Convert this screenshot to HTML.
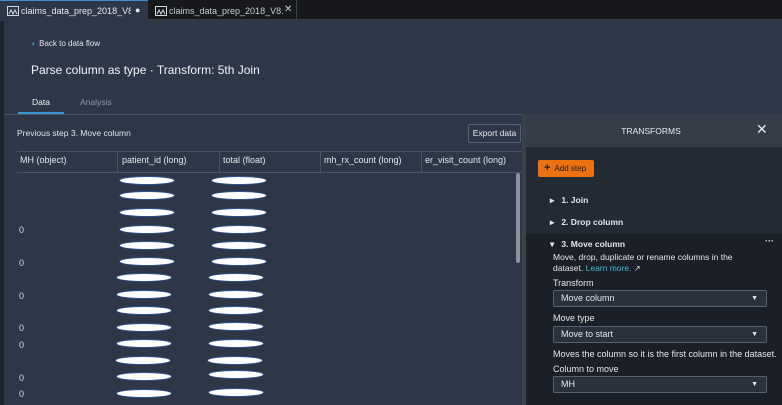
<!DOCTYPE html>
<html><head><meta charset="utf-8"><style>
*{box-sizing:border-box;margin:0;padding:0}
body{width:782px;height:405px;overflow:hidden;background:#2d3748;font-family:"Liberation Sans",sans-serif;position:relative;color:#d5dbe3}
.abs{position:absolute}
.tabbar{left:0;top:0;width:782px;height:20px;background:#17191d;border-bottom:1px solid #3a3f47}
.tab{top:2px;height:18px;font-size:9px;color:#e8eaed;line-height:18px;white-space:nowrap;overflow:hidden}
.ic{position:absolute;top:6px;width:12px;height:10px;border:1px solid #cfd6de}
.ic svg{position:absolute;left:0;top:0}
.el{position:absolute;width:56px;height:9px;border-radius:50%;background:#fff;border:1.5px solid #2f5597}
.z{position:absolute;left:19px;font-size:9px;color:#d5dbe3}
.th{position:absolute;top:155px;font-size:9px;color:#e3e7ec}
.sep{position:absolute;width:1px;background:#4a5363}
.sel{position:absolute;left:553px;width:214px;height:17px;background:#2a313c;border:1px solid #56606e;border-radius:2px;font-size:9px;color:#e3e7ec;line-height:15px;padding-left:7px}
.sel:after{content:"▼";position:absolute;right:8px;top:0;font-size:7px}
.lbl{position:absolute;left:553px;font-size:9px;color:#e3e7ec}
</style></head><body>
<div class="abs tabbar"></div>
<div class="abs" style="left:0;top:0;width:148px;height:21px;background:#2d3748;border-top:1px solid #3d8fd0"></div>
<div class="ic" style="left:7px"><svg width="12" height="10"><path d="M1 7 L3 3 L5 7 L7 3 L9 7" stroke="#cfd6de" fill="none"/></svg></div>
<div class="abs tab" style="left:21px;width:110px">claims_data_prep_2018_V8_[</div>
<div class="abs" style="left:135px;top:5px;font-size:9px;color:#e8eaed">●</div>
<div class="abs" style="left:149px;top:0;width:148px;height:20px;border-right:1px solid #3a3f47"></div>
<div class="ic" style="left:155px"><svg width="12" height="10"><path d="M1 7 L3 3 L5 7 L7 3 L9 7" stroke="#cfd6de" fill="none"/></svg></div>
<div class="abs tab" style="left:169px;width:115px;color:#c8ccd2">claims_data_prep_2018_V8.fl</div>
<div class="abs" style="left:284px;top:4px;font-size:10px;color:#c8ccd2">✕</div>
<div class="abs" style="left:0;top:21px;width:4px;height:384px;background:#1e242d"></div>
<div class="abs" style="left:32px;top:39px;font-size:8px;color:#dfe4ea"><span style="color:#44b9d6;font-weight:bold">‹</span>&nbsp; Back to data flow</div>
<div class="abs" style="left:31px;top:63px;font-size:12px;color:#f2f4f7">Parse column as type · Transform: 5th Join</div>
<div class="abs" style="left:32px;top:97px;font-size:8.5px;color:#f2f4f7">Data</div>
<div class="abs" style="left:80px;top:97px;font-size:8.5px;color:#8c96a3">Analysis</div>
<div class="abs" style="left:18px;top:112px;width:46px;height:2px;background:#3d9ad1"></div>
<div class="abs" style="left:4px;top:114px;width:778px;height:1px;background:#4a5363"></div>
<div class="abs" style="left:17px;top:128px;font-size:8.5px;color:#dfe4ea">Previous step 3. Move column</div>
<div class="abs" style="left:468px;top:124px;width:53px;height:19px;border:1px solid #5a6373;border-radius:2px;font-size:8.5px;line-height:17px;text-align:center;color:#e8ebef">Export data</div>
<div class="abs" style="left:17px;top:151px;width:505px;height:1px;background:#4a5363"></div>
<div class="abs" style="left:17px;top:172px;width:505px;height:1px;background:#4a5363"></div>
<div class="sep" style="left:117px;top:152px;height:20px"></div>
<div class="sep" style="left:219px;top:152px;height:20px"></div>
<div class="sep" style="left:320px;top:152px;height:20px"></div>
<div class="sep" style="left:421px;top:152px;height:20px"></div>
<div class="th" style="left:20px">MH (object)</div>
<div class="th" style="left:122px">patient_id (long)</div>
<div class="th" style="left:223px">total (float)</div>
<div class="th" style="left:324px">mh_rx_count (long)</div>
<div class="th" style="left:425px">er_visit_count (long)</div>
<div class="abs" style="left:516px;top:173px;width:4px;height:90px;background:#8a929c;border-radius:2px"></div>
<div class="abs" style="left:522px;top:114px;width:4px;height:291px;background:#3a414b"></div>
<div class="z" style="top:225px">0</div><div class="z" style="top:258px">0</div><div class="z" style="top:291px">0</div><div class="z" style="top:323px">0</div><div class="z" style="top:340px">0</div><div class="z" style="top:373px">0</div><div class="z" style="top:389px">0</div>
<div class="el" style="left:119px;top:176px"></div><div class="el" style="left:211px;top:176px"></div>
<div class="el" style="left:119px;top:191px"></div><div class="el" style="left:211px;top:191px"></div>
<div class="el" style="left:119px;top:208px"></div><div class="el" style="left:211px;top:208px"></div>
<div class="el" style="left:119px;top:225px"></div><div class="el" style="left:211px;top:225px"></div>
<div class="el" style="left:119px;top:241px"></div><div class="el" style="left:211px;top:241px"></div>
<div class="el" style="left:119px;top:257px"></div><div class="el" style="left:211px;top:257px"></div>
<div class="el" style="left:116px;top:273px"></div><div class="el" style="left:208px;top:273px"></div>
<div class="el" style="left:116px;top:290px"></div><div class="el" style="left:208px;top:290px"></div>
<div class="el" style="left:116px;top:306px"></div><div class="el" style="left:208px;top:306px"></div>
<div class="el" style="left:116px;top:323px"></div><div class="el" style="left:208px;top:322px"></div>
<div class="el" style="left:116px;top:339px"></div><div class="el" style="left:208px;top:339px"></div>
<div class="el" style="left:115px;top:356px"></div><div class="el" style="left:207px;top:356px"></div>
<div class="el" style="left:116px;top:372px"></div><div class="el" style="left:208px;top:370px"></div>
<div class="el" style="left:116px;top:389px"></div><div class="el" style="left:208px;top:388px"></div>
<div class="abs" style="left:526px;top:114px;width:256px;height:34px;background:#353d49;border-bottom:1px solid #2a3038"></div>
<div class="abs" style="left:526px;top:126px;width:250px;text-align:center;font-size:8.5px;color:#e8ebef">TRANSFORMS</div>
<div class="abs" style="left:756px;top:121px;font-size:14px;color:#e8ebef">✕</div>
<div class="abs" style="left:526px;top:148px;width:256px;height:86px;background:#232a33"></div>
<div class="abs" style="left:538px;top:160px;width:56px;height:17px;background:#ec7211;border-radius:2px;font-size:8px;color:#1a1a1a;line-height:17px;padding-left:6px"><b style="font-size:11px">+</b>&nbsp; Add step</div>
<div class="abs" style="left:550px;top:195px;font-size:8.5px;font-weight:bold;color:#e3e7ec">▸&nbsp;&nbsp; 1. Join</div>
<div class="abs" style="left:550px;top:217px;font-size:8.5px;font-weight:bold;color:#e3e7ec">▸&nbsp;&nbsp; 2. Drop column</div>
<div class="abs" style="left:526px;top:234px;width:256px;height:171px;background:#1b2028"></div>
<div class="abs" style="left:550px;top:239px;font-size:8.5px;font-weight:bold;color:#e3e7ec">▾&nbsp;&nbsp; 3. Move column</div>
<div class="abs" style="left:765px;top:236px;font-size:9px;font-weight:bold;color:#e3e7ec">···</div>
<div class="abs" style="left:553px;top:252px;width:200px;font-size:8.5px;line-height:10.5px;color:#e3e7ec">Move, drop, duplicate or rename columns in the dataset. <span style="color:#44b9d6">Learn more.</span> <span style="font-size:8px">↗</span></div>
<div class="lbl" style="top:278px">Transform</div>
<div class="sel" style="top:290px">Move column</div>
<div class="lbl" style="top:313px">Move type</div>
<div class="sel" style="top:326px">Move to start</div>
<div class="lbl" style="top:349px">Moves the column so it is the first column in the dataset.</div>
<div class="lbl" style="top:364px">Column to move</div>
<div class="sel" style="top:376px">MH</div>
</body></html>
